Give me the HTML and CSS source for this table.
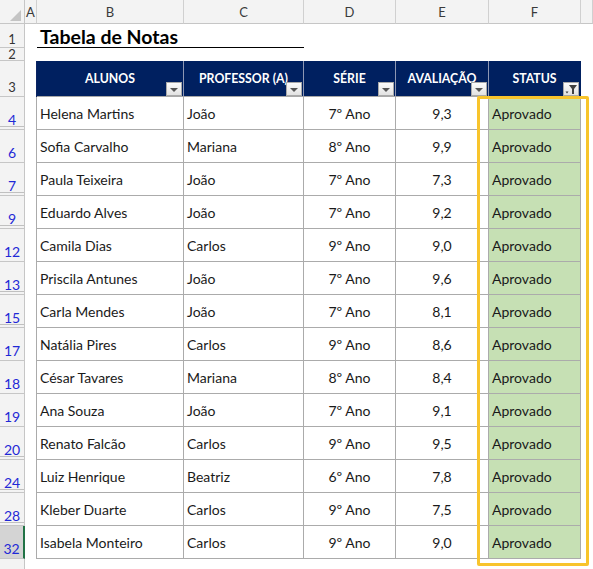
FILE: index.html
```html
<!DOCTYPE html>
<html lang="pt">
<head>
<meta charset="utf-8">
<link rel="stylesheet" href="styles.css">
</head>
<body>
<div class="sheet">
  <div class="row r-ch">
    <div class="c rh corner"><span class="tri"></span></div>
    <div class="c ca chl">A</div>
    <div class="c cb chl">B</div>
    <div class="c cc chl">C</div>
    <div class="c cd chl">D</div>
    <div class="c ce chl">E</div>
    <div class="c cf chl">F</div>
    <div class="c cg chl"></div>
  </div>
  <div class="row r1">
    <div class="c rh">1</div>
    <div class="c ca"></div>
    <div class="c cb title"><span>Tabela de Notas</span></div>
    <div class="c cc uline"></div>
    <div class="c cd"></div><div class="c ce"></div><div class="c cf"></div><div class="c cg"></div>
  </div>
  <div class="row r2">
    <div class="c rh">2</div>
    <div class="c ca"></div><div class="c cb"></div><div class="c cc"></div><div class="c cd"></div><div class="c ce"></div><div class="c cf"></div><div class="c cg"></div>
  </div>
  <div class="row r3">
    <div class="c rh">3</div>
    <div class="c ca hda"></div>
    <div class="c cb th">ALUNOS<span class="dd"><i class="arr"></i></span></div>
    <div class="c cc th">PROFESSOR (A)<span class="dd"><i class="arr"></i></span></div>
    <div class="c cd th">SÉRIE<span class="dd"><i class="arr"></i></span></div>
    <div class="c ce th">AVALIAÇÃO<span class="dd"><i class="arr"></i></span></div>
    <div class="c cf th last">STATUS<span class="dd"><svg class="flt" width="14" height="12" viewBox="0 0 14 12"><path d="M5 2 H13 L10 6 V11 H8 V6 Z" fill="#404040"/><path d="M1.5 8.5 H4.5 L3 10.5 Z" fill="#404040"/></svg></span></div>
    <div class="c cg"></div>
  </div>

  <div class="row rd"><div class="c rh hid">4</div><div class="c ca tl"></div><div class="c cb td">Helena Martins</div><div class="c cc td">João</div><div class="c cd td ctr">7º Ano</div><div class="c ce td ctr">9,3</div><div class="c cf td ok">Aprovado</div><div class="c cg"></div></div>
  <div class="row rd"><div class="c rh">6</div><div class="c ca tl"></div><div class="c cb td">Sofia Carvalho</div><div class="c cc td">Mariana</div><div class="c cd td ctr">8º Ano</div><div class="c ce td ctr">9,9</div><div class="c cf td ok">Aprovado</div><div class="c cg"></div></div>
  <div class="row rd"><div class="c rh hid">7</div><div class="c ca tl"></div><div class="c cb td">Paula Teixeira</div><div class="c cc td">João</div><div class="c cd td ctr">7º Ano</div><div class="c ce td ctr">7,3</div><div class="c cf td ok">Aprovado</div><div class="c cg"></div></div>
  <div class="row rd"><div class="c rh hid">9</div><div class="c ca tl"></div><div class="c cb td">Eduardo Alves</div><div class="c cc td">João</div><div class="c cd td ctr">7º Ano</div><div class="c ce td ctr">9,2</div><div class="c cf td ok">Aprovado</div><div class="c cg"></div></div>
  <div class="row rd"><div class="c rh">12</div><div class="c ca tl"></div><div class="c cb td">Camila Dias</div><div class="c cc td">Carlos</div><div class="c cd td ctr">9º Ano</div><div class="c ce td ctr">9,0</div><div class="c cf td ok">Aprovado</div><div class="c cg"></div></div>
  <div class="row rd"><div class="c rh hid">13</div><div class="c ca tl"></div><div class="c cb td">Priscila Antunes</div><div class="c cc td">João</div><div class="c cd td ctr">7º Ano</div><div class="c ce td ctr">9,6</div><div class="c cf td ok">Aprovado</div><div class="c cg"></div></div>
  <div class="row rd"><div class="c rh hid">15</div><div class="c ca tl"></div><div class="c cb td">Carla Mendes</div><div class="c cc td">João</div><div class="c cd td ctr">7º Ano</div><div class="c ce td ctr">8,1</div><div class="c cf td ok">Aprovado</div><div class="c cg"></div></div>
  <div class="row rd"><div class="c rh">17</div><div class="c ca tl"></div><div class="c cb td">Natália Pires</div><div class="c cc td">Carlos</div><div class="c cd td ctr">9º Ano</div><div class="c ce td ctr">8,6</div><div class="c cf td ok">Aprovado</div><div class="c cg"></div></div>
  <div class="row rd"><div class="c rh">18</div><div class="c ca tl"></div><div class="c cb td">César Tavares</div><div class="c cc td">Mariana</div><div class="c cd td ctr">8º Ano</div><div class="c ce td ctr">8,4</div><div class="c cf td ok">Aprovado</div><div class="c cg"></div></div>
  <div class="row rd"><div class="c rh">19</div><div class="c ca tl"></div><div class="c cb td">Ana Souza</div><div class="c cc td">João</div><div class="c cd td ctr">7º Ano</div><div class="c ce td ctr">9,1</div><div class="c cf td ok">Aprovado</div><div class="c cg"></div></div>
  <div class="row rd"><div class="c rh hid">20</div><div class="c ca tl"></div><div class="c cb td">Renato Falcão</div><div class="c cc td">Carlos</div><div class="c cd td ctr">9º Ano</div><div class="c ce td ctr">9,5</div><div class="c cf td ok">Aprovado</div><div class="c cg"></div></div>
  <div class="row rd"><div class="c rh hid">24</div><div class="c ca tl"></div><div class="c cb td">Luiz Henrique</div><div class="c cc td">Beatriz</div><div class="c cd td ctr">6º Ano</div><div class="c ce td ctr">7,8</div><div class="c cf td ok">Aprovado</div><div class="c cg"></div></div>
  <div class="row rd"><div class="c rh hid">28</div><div class="c ca tl"></div><div class="c cb td">Kleber Duarte</div><div class="c cc td">Carlos</div><div class="c cd td ctr">9º Ano</div><div class="c ce td ctr">7,5</div><div class="c cf td ok">Aprovado</div><div class="c cg"></div></div>
  <div class="row rd"><div class="c rh sel">32</div><div class="c ca tl"></div><div class="c cb td">Isabela Monteiro</div><div class="c cc td">Carlos</div><div class="c cd td ctr">9º Ano</div><div class="c ce td ctr">9,0</div><div class="c cf td ok">Aprovado</div><div class="c cg"></div></div>
  <div class="row rend"><div class="c rh"></div><div class="c cg"></div></div>

  <div class="hl"></div>
</div>
</body>
</html>
```

FILE: styles.css
```css
* { box-sizing: border-box; margin: 0; padding: 0; }
html, body { background: #ffffff; }
body { width: 593px; height: 569px; overflow: hidden; font-family: "Lato", "Liberation Sans", sans-serif; color: #1e1e1e; }

.sheet { position: relative; width: 593px; height: 569px; overflow: hidden; }
.row { display: flex; }
.c { flex: none; display: flex; align-items: center; white-space: nowrap; }

.rh { width: 25px; justify-content: center; align-items: flex-end; background: #f3f3f3; border-right: 1px solid #c6c6c6; border-bottom: 1px solid #c6c6c6; font-size: 13px; line-height: 15px; padding-bottom: 1px; color: #333; }
.ca { width: 12px; }
.cb { width: 147px; }
.cc { width: 120px; }
.cd { width: 92px; }
.ce { width: 93px; }
.cf { width: 92px; }
.cg { flex: 1 1 auto; }

/* column header bar */
.r-ch { height: 24px; }
.r-ch .c { background: #f3f3f3; border-bottom: 1px solid #c6c6c6; }
.chl { justify-content: center; font-size: 13px; color: #3a3a3a; border-right: 1px solid #d0d0d0; }
.corner { position: relative; align-items: stretch; }
.tri { position: absolute; left: 10px; top: 10px; width: 11px; height: 11px; background: #c4c4c4; clip-path: polygon(100% 0, 100% 100%, 0 100%); }

/* title rows */
.r1 { height: 24px; }
.r1 .rh { padding-bottom: 0; }
.r2 { height: 13px; }
.r2 .rh { line-height: 12px; padding-bottom: 0; }
.title { font-weight: 700; font-size: 19.5px; line-height: 20px; padding-left: 3px; align-items: flex-end; padding-bottom: 0; overflow: visible; border-bottom: 1px solid #000; color: #000; }
.uline { border-bottom: 1px solid #000; }

/* table header */
.r3 { height: 36px; }
.hda { border-right: 1px solid #0b2463; }
.th { position: relative; justify-content: center; background: #002060; color: #ffffff; font-weight: 700; font-size: 12.3px; border-right: 1px solid #8e97b3; border-bottom: 1px solid #a8a8a8; }
.th.last { border-right: 1px solid #002060; }
.dd { position: absolute; right: 1px; bottom: 0; width: 16px; height: 14px; background: linear-gradient(#fbfbfb, #e2e2e2); border: 1px solid #a9a9a9; display: flex; align-items: center; justify-content: center; }
.arr { display: block; width: 0; height: 0; border-left: 4px solid transparent; border-right: 4px solid transparent; border-top: 4px solid #555; margin-top: 1px; }
.flt { display: block; }

/* data rows */
.rd { height: 33px; }
.rd .rh { color: #1f29d6; font-size: 14px; padding-bottom: 2px; }
.rh.hid { box-shadow: inset 0 -2px 0 #f3f3f3, inset 0 -3px 0 #c0c0c0; }
.rh.sel { background: #d4d4d4; border-right: 2px solid #217346; color: #1f29d6; }
.tl { border-right: 1px solid #ababab; }
.td { font-size: 14px; padding-left: 3px; border-right: 1px solid #ababab; border-bottom: 1px solid #ababab; color: #1a1a1a; }
.td.ctr { justify-content: center; padding-left: 0; }
.td.ok { background: #c6e0b4; }
.rend { height: 20px; }

/* highlight overlay */
.hl { position: absolute; left: 477px; top: 96px; width: 112px; height: 470px; border: 3px solid #f8c42c; border-radius: 2px; pointer-events: none; }
```
